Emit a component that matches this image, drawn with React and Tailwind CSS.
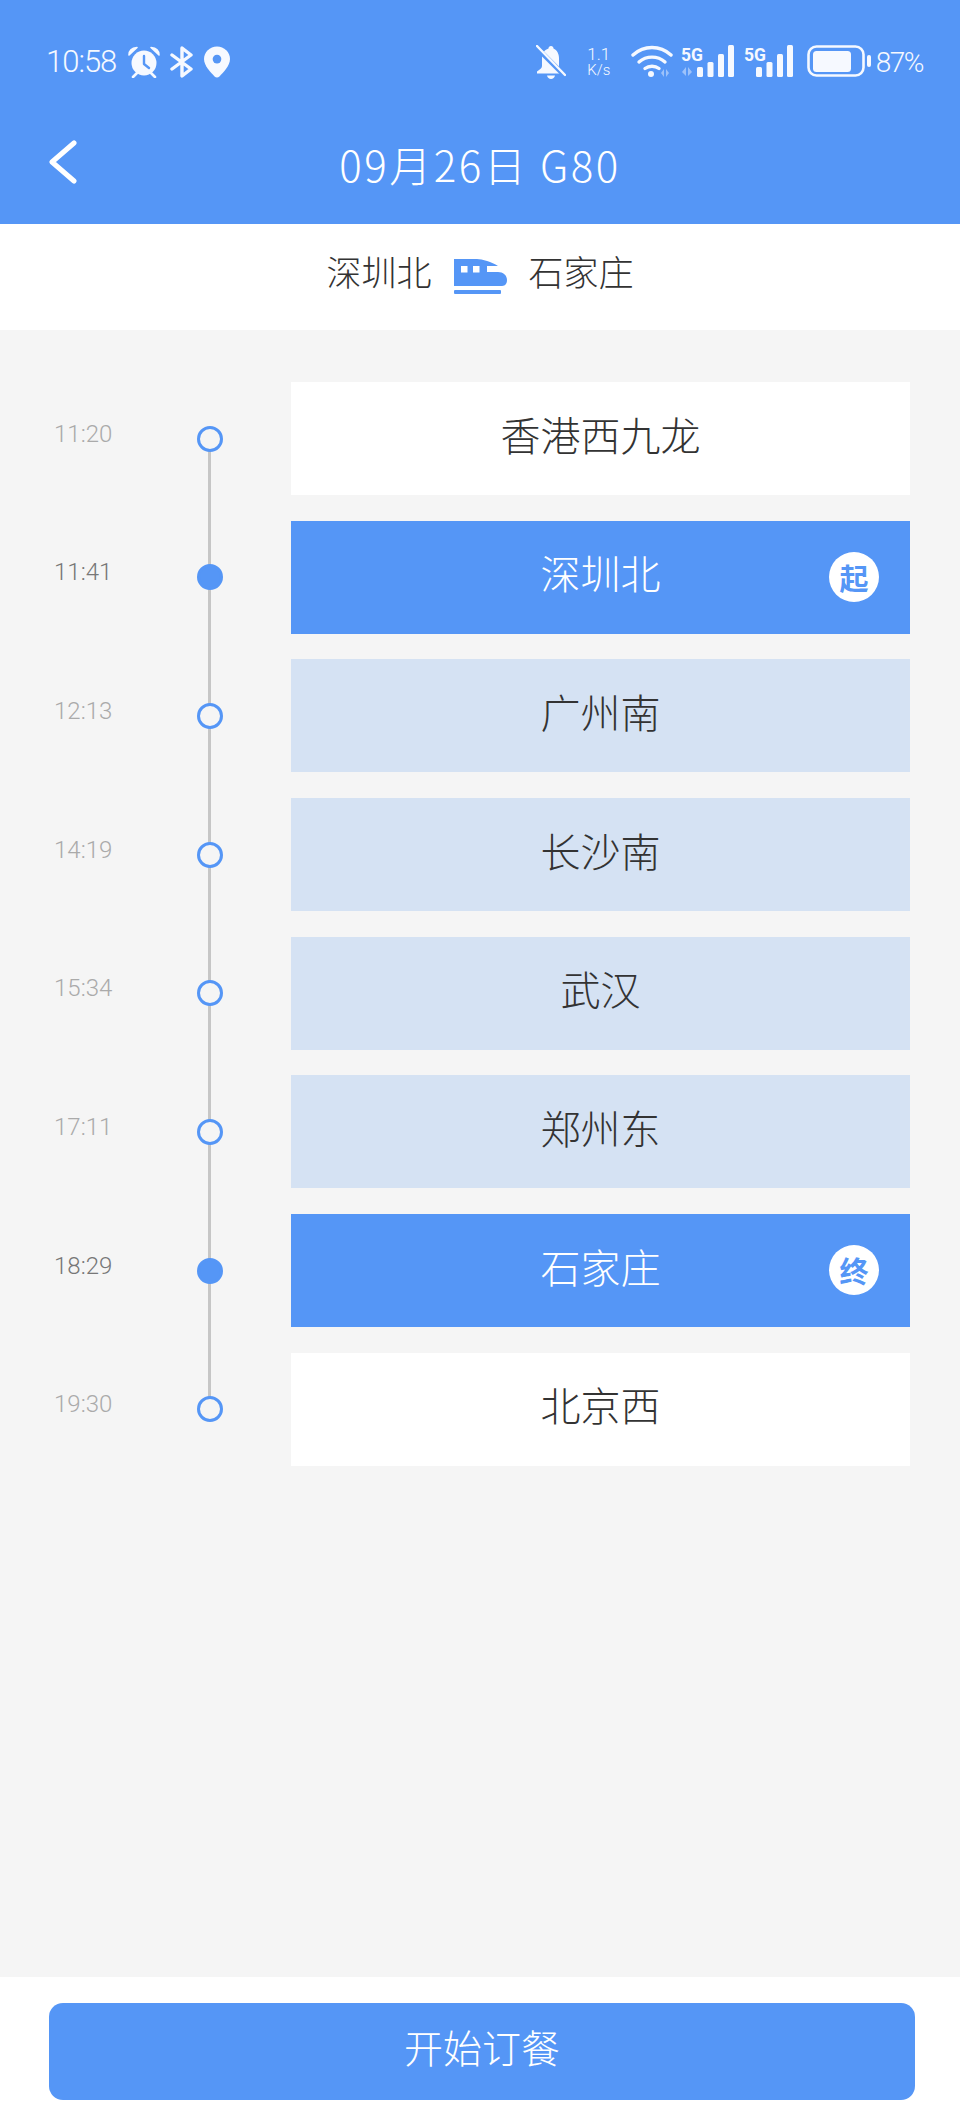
const cjk = "font-['Noto_Sans_CJK_SC',sans-serif]";

const stops = [
  { time: "11:20", name: "香港西九龙" },
  { time: "11:41", name: "深圳北", badge: "起", active: true },
  { time: "12:13", name: "广州南", inRange: true },
  { time: "14:19", name: "长沙南", inRange: true },
  { time: "15:34", name: "武汉", inRange: true },
  { time: "17:11", name: "郑州东", inRange: true },
  { time: "18:29", name: "石家庄", badge: "终", active: true },
  { time: "19:30", name: "北京西" },
];

function AlarmIcon() {
  return (
    <svg width="32" height="32" viewBox="0 0 32 32" fill="none">
      <circle cx="16" cy="17" r="12.500" fill="#f6f9ff" />
      <path d="M16 10v8l5 4" stroke="#5596f6" strokeWidth="2.400" strokeLinecap="round" strokeLinejoin="round" />
      <path d="M1 9c0-4 3-7 8-7.500L1 9zM31 9c0-4-3-7-8-7.500L31 9z" fill="#f6f9ff" stroke="#f6f9ff" strokeWidth="1.600" strokeLinejoin="round" />
      <path d="M5 31l4-4M27 31l-4-4" stroke="#f6f9ff" strokeWidth="2.600" strokeLinecap="round" />
    </svg>
  );
}

function BluetoothIcon() {
  return (
    <svg width="24" height="32" viewBox="0 0 24 32" fill="none">
      <path d="M2 9l19 14-9 7V2l9 7L2 23" stroke="#f6f9ff" strokeWidth="3.400" strokeLinejoin="round" strokeLinecap="round" />
    </svg>
  );
}

function PinIcon() {
  return (
    <svg width="26" height="32" viewBox="0 0 27 32">
      <path d="M13.500 0C6 0 0 5.800 0 13c0 7 7 14 11 18 1.400 1.300 3.600 1.300 5 0 4-4 11-11 11-18C27 5.800 21 0 13.500 0z" fill="#f6f9ff" />
      <circle cx="13.500" cy="13" r="4.500" fill="#5596f6" />
    </svg>
  );
}

function MutedBell() {
  return (
    <svg width="30" height="35" viewBox="0 0 30 35">
      <path d="M15 1c-1.500 0-2.500 1-2.500 2.500C8 5 6 9 6 13v8c0 2-2 3.500-5 5.500v2h26v-2c-2-1.500-4-3-4-5.500v-8c0-4-2-8-5.500-9.500C17.500 2 16.500 1 15 1z" fill="#f6f9ff" />
      <path d="M11 30.500c.5 2 2 3.500 4 3.500s3.500-1.500 4-3.500z" fill="#f6f9ff" />
      <path d="M0 2l30 30" stroke="#5596f6" strokeWidth="5" />
      <path d="M1 1l28 29" stroke="#f6f9ff" strokeWidth="2.400" strokeLinecap="round" />
    </svg>
  );
}

function WifiIcon() {
  return (
    <svg width="42" height="32" viewBox="0 0 42 32" fill="none">
      <path d="M2 10c11-10 27-10 38 0" stroke="#f6f9ff" strokeWidth="3.400" strokeLinecap="round" />
      <path d="M8 17c7.500-6.500 18.500-6.500 26 0" stroke="#f6f9ff" strokeWidth="3.400" strokeLinecap="round" />
      <path d="M14 23.500c4-3 10-3 14 0" stroke="#f6f9ff" strokeWidth="3.400" strokeLinecap="round" />
      <circle cx="20" cy="29" r="3" fill="#f6f9ff" />
      <path d="M30 28l3-4v8zM35 24l3 4-3 4z" fill="#f6f9ff" opacity="0.450" />
    </svg>
  );
}

function SignalIcon({ arrows, width }) {
  return (
    <svg width={width} height="32" viewBox={`0 0 ${width} 32`}>
      <text x="0" y="16" fontSize="18" fontWeight="700" fontFamily="Roboto, sans-serif" fill="#f6f9ff" textLength="22" lengthAdjust="spacingAndGlyphs">5G</text>
      {arrows && <path d="M1 27l4-5v9zM7 22l4 5-4 4z" fill="#f6f9ff" opacity="0.450" />}
      <rect x={width - 37} y="22" width="6" height="10" rx="1.500" fill="#f6f9ff" />
      <rect x={width - 26.500} y="17" width="6" height="15" rx="1.500" fill="#f6f9ff" />
      <rect x={width - 16} y="9" width="6" height="23" rx="1.500" fill="#f6f9ff" />
      <rect x={width - 6} y="0" width="6" height="32" rx="1.500" fill="#f6f9ff" />
    </svg>
  );
}

function BatteryIcon() {
  return (
    <svg width="65" height="32" viewBox="0 0 65 32">
      <rect x="1.500" y="1.500" width="55" height="29" rx="8" fill="none" stroke="#f6f9ff" strokeWidth="2.600" />
      <rect x="6" y="6" width="38" height="21" rx="3.500" fill="#f6f9ff" />
      <rect x="60" y="10" width="4" height="12" rx="2" fill="#f6f9ff" />
    </svg>
  );
}

function TrainIcon() {
  return (
    <svg width="53" height="36" viewBox="0 0 53 36">
      <path d="M0 0h23c5 0 15 3 21 7H33v6h11c5 0 9 3 9 8s-3 6-6 6H0z" fill="#5596f6" />
      <rect x="7" y="7" width="6.500" height="6.500" fill="#fff" />
      <rect x="19" y="7" width="6.500" height="6.500" fill="#fff" />
      <rect x="0" y="31" width="47" height="4" rx="1" fill="#5596f6" />
    </svg>
  );
}

function StopRow({ stop }) {
  const cardColor = stop.active ? "bg-[#5596f6] text-white" : stop.inRange ? "bg-[#d5e2f3] text-[#333]" : "bg-white text-[#333]";
  return (
    <div className="flex items-center">
      <div className={`w-[184px] pl-[54px] -mt-[10px] font-['Roboto',sans-serif] font-light text-[24px] leading-[30px] ${stop.active ? "text-[#777]" : "text-[#aaa]"}`}>
        {stop.time}
      </div>
      <div className="w-[52px] flex justify-center">
        <div className={`relative w-[26px] h-[26px] rounded-full border-[3px] border-[#5596f6] ${stop.active ? "bg-[#5596f6]" : "bg-[#f5f5f5]"}`} />
      </div>
      <div className={`relative ml-[55px] w-[619px] h-[113px] flex items-center justify-center text-[40px] font-light ${cjk} ${cardColor}`}>
        <span className="-mt-[10px]">{stop.name}</span>
        {stop.badge && (
          <span className="absolute right-[31px] top-[31px] w-[50px] h-[50px] rounded-full bg-white text-[#5596f6] text-[29px] font-bold leading-[50px] text-center">
            {stop.badge}
          </span>
        )}
      </div>
    </div>
  );
}

export default function App() {
  return (
    <div className="w-[960px] h-[2122px] flex flex-col bg-[#f5f5f5] overflow-hidden">
      <header className="h-[224px] bg-[#5596f6] text-white shrink-0">
        <div className="h-[36px] mt-[45px] pl-[46px] pr-[37px] flex items-start justify-between">
          <div className="flex items-center gap-[10px] h-[33px]">
            <span className="w-[72px] font-['Roboto',sans-serif] font-light text-[31px] leading-[33px] tracking-[-1px] text-[#f6f9ff]">10:58</span>
            <AlarmIcon />
            <BluetoothIcon />
            <PinIcon />
          </div>
          <div className="flex items-start">
            <MutedBell />
            <div className="w-[26px] ml-[20px] flex flex-col items-center font-['Roboto',sans-serif] text-[#f6f9ff]">
              <span className="text-[17px] leading-[18px] font-light">1.1</span>
              <span className="text-[15px] leading-[15px] font-light">K/s</span>
            </div>
            <div className="ml-[19px]"><WifiIcon /></div>
            <div className="ml-[8px]"><SignalIcon arrows width={53} /></div>
            <div className="ml-[10px]"><SignalIcon width={49} /></div>
            <div className="ml-[14px]"><BatteryIcon /></div>
            <span className="ml-[4px] font-['Roboto',sans-serif] font-light text-[28px] leading-[33px] tracking-[-1.500px] mt-[1px] text-[#f6f9ff]">87%</span>
          </div>
        </div>
        <div className="relative h-[102px] mt-[31px] flex items-center justify-center">
          <svg className="absolute left-[47px] top-[28px]" width="32" height="44" viewBox="0 0 32 44" fill="none">
            <path d="M27 3L5 22l22 19" stroke="#fff" strokeWidth="5" strokeLinecap="round" strokeLinejoin="round" />
          </svg>
          <span className={`text-[42px] font-light tracking-[2.500px] ${cjk}`}>09月26日 G80</span>
        </div>
      </header>

      <div className="h-[106px] bg-white shrink-0 flex items-center justify-center gap-[22px] text-[#333] text-[35px] font-light">
        <span className={`${cjk} -mt-[12px]`}>深圳北</span>
        <TrainIcon />
        <span className={`${cjk} -mt-[12px]`}>石家庄</span>
      </div>

      <main className="relative flex-1 pt-[52px] flex flex-col gap-[25.700px]">
        {/* the rail runs from the first dot to the last one, behind them */}
        <div className="absolute left-[207.500px] top-[109px] w-[3px] h-[971px] bg-[#c6c6c6]" />
        {stops.map((stop) => (
          <StopRow key={stop.time} stop={stop} />
        ))}
      </main>

      <footer className="h-[145px] bg-white shrink-0 pt-[26px] pl-[49px]">
        <button className={`w-[866px] h-[97px] pb-[10px] rounded-[14px] bg-[#5596f6] text-white text-[39px] font-light ${cjk}`}>
          开始订餐
        </button>
      </footer>
    </div>
  );
}
